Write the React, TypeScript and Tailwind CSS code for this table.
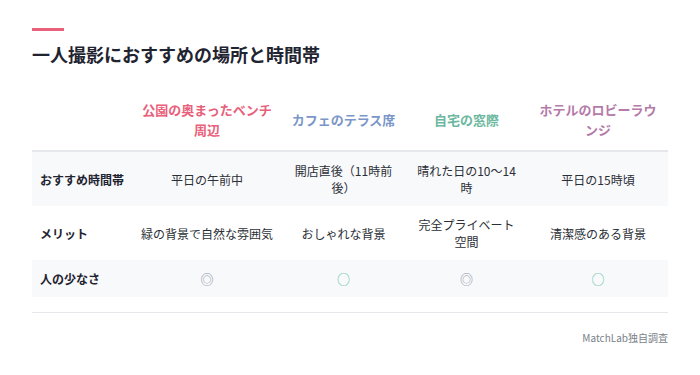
const columns = [
  { name: "公園の奥まったベンチ周辺", color: "text-[#e8607a]", width: "w-[150px]" },
  { name: "カフェのテラス席", color: "text-[#7b96c8]", width: "w-[123px]" },
  { name: "自宅の窓際", color: "text-[#6cb8a0]", width: "w-[123px]" },
  { name: "ホテルのロビーラウンジ", color: "text-[#b57aa8]", width: "w-[140px]" },
]

const rows = [
  {
    label: "おすすめ時間帯",
    cells: ["平日の午前中", "開店直後（11時前後）", "晴れた日の10〜14時", "平日の15時頃"],
    shaded: true,
  },
  {
    label: "メリット",
    cells: ["緑の背景で自然な雰囲気", "おしゃれな背景", "完全プライベート空間", "清潔感のある背景"],
    shaded: false,
  },
  {
    label: "人の少なさ",
    cells: ["◎", "○", "◎", "○"],
    shaded: true,
  },
]

function Mark({ value }: { value: string }) {
  if (value === "◎") {
    return <span className="text-[13px] text-[#8c94a8]">◎</span>
  }
  if (value === "○") {
    return <span className="text-[13px] text-[#5cbf9c]">○</span>
  }
  return <>{value}</>
}

export default function App() {
  return (
    <div className="min-h-[375px] w-[700px] bg-white px-8 pt-7 font-['Noto_Sans_CJK_JP','Noto_Sans',sans-serif] text-[#2b2f36]">
      <div className="mb-[10px] h-[3px] w-8 bg-[#e8607a]" />

      <h2 className="text-[18px] font-bold leading-[27px] text-[#1f2430]">
        一人撮影におすすめの場所と時間帯
      </h2>

      <table className="mt-[22px] w-[636px] table-fixed border-collapse">
        <thead>
          <tr className="border-b-2 border-[#e5e7eb]">
            <th className="w-[100px]" />
            {columns.map((col) => (
              <th
                key={col.name}
                className={`${col.width} ${col.color} px-2 py-[10px] text-center align-middle text-[13px] font-bold leading-5`}
              >
                {col.name}
              </th>
            ))}
          </tr>
        </thead>

        <tbody>
          {rows.map((row) => (
            <tr key={row.label} className={row.shaded ? "bg-[#f8f9fb]" : "bg-white"}>
              <td className="px-2 py-[10px] align-middle text-[12px] font-bold leading-[17px] text-[#1f2430]">
                {row.label}
              </td>
              {row.cells.map((cell, i) => (
                <td
                  key={i}
                  className="px-2 py-[10px] text-center align-middle text-[12px] leading-[17px] text-[#2b2f36]"
                >
                  <Mark value={cell} />
                </td>
              ))}
            </tr>
          ))}
        </tbody>
      </table>

      <div className="mt-[15px] border-t border-[#e5e7eb] pt-[17px] text-right text-[10px] leading-[15px] text-[#7a7f88]">
        MatchLab独自調査
      </div>
    </div>
  )
}
